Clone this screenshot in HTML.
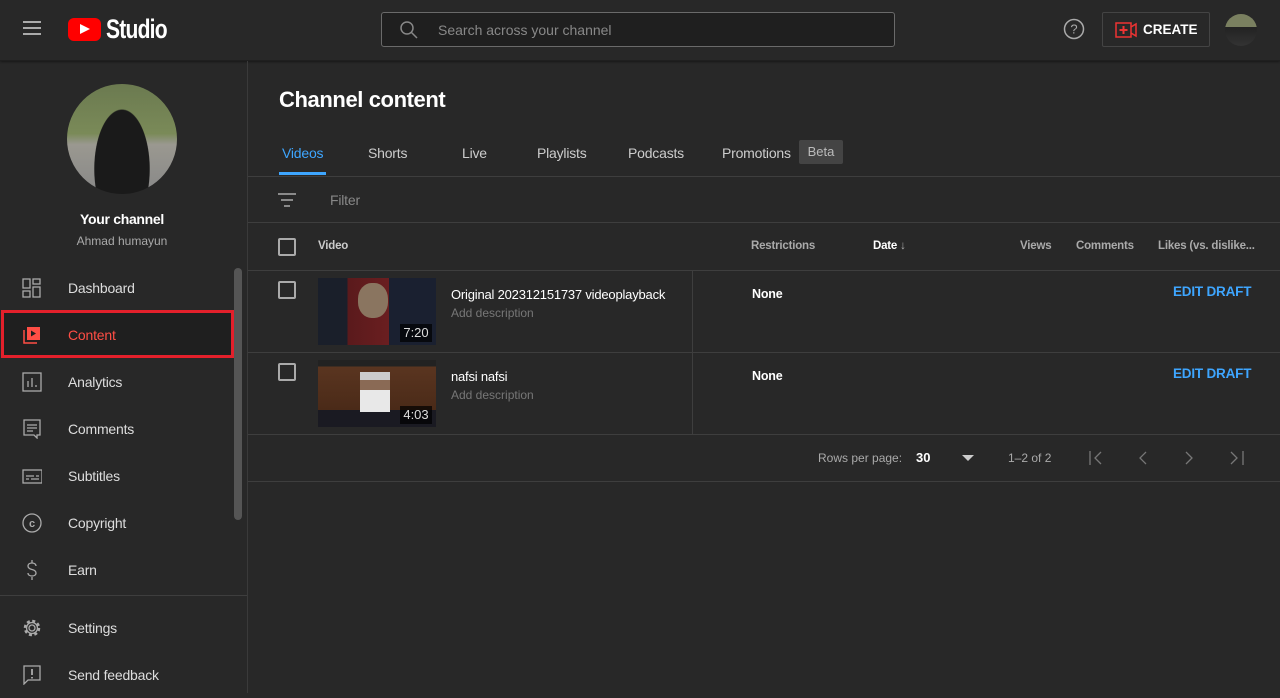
<!DOCTYPE html>
<html><head><meta charset="utf-8"><style>
*{box-sizing:border-box;margin:0;padding:0}
body{width:1280px;height:693px;overflow:hidden;background:#282828;font-family:"Liberation Sans",sans-serif;color:#fff;position:relative}
.abs{position:absolute}
.hdr{left:0;top:0;width:1280px;height:61px;border-bottom:1px solid #1f1f1f;box-shadow:0 1px 2px rgba(0,0,0,.4)}
.side{left:0;top:61px;width:248px;height:632px;border-right:1px solid #3a3a3a}
.nav{position:absolute;left:0;width:234px;height:47px;display:flex;align-items:center;font-size:14px;color:#ddd;letter-spacing:-.2px}
.nav svg{position:absolute;left:22px}
.nav span{position:absolute;left:68px}
.t{font-size:14px;letter-spacing:-.2px}
.tab{font-size:14px;letter-spacing:-.2px;color:#ccc}
.line{position:absolute;left:248px;width:1032px;height:1px;background:#3e3e3e}
.cb{position:absolute;width:18px;height:18px;border:2px solid #aaa;border-radius:2px}
.th{position:absolute;top:240px;font-size:11.5px;color:#aaa;font-weight:bold;letter-spacing:-.2px}
</style></head><body>
<div class="abs hdr">
 <div class="abs" style="left:23px;top:21px;width:18px;height:2px;background:#aaa;box-shadow:0 6px 0 #aaa,0 12px 0 #aaa"></div>
 <div class="abs" style="left:68px;top:18px;width:33px;height:23px;background:#f00;border-radius:6px"></div>
 <div class="abs" style="left:80px;top:24px;width:0;height:0;border-left:10px solid #fff;border-top:5.5px solid transparent;border-bottom:5.5px solid transparent"></div>
 <div class="abs" style="left:106px;top:14px;font-size:27px;font-weight:bold;letter-spacing:-1px;transform:scaleX(.78);transform-origin:left">Studio</div>
 <div class="abs" style="left:381px;top:12px;width:514px;height:35px;border:1px solid #6a6a6a;border-radius:3px;background:#1f1f1f">
  <svg class="abs" style="left:17px;top:7px" width="20" height="20" viewBox="0 0 20 20"><circle cx="8" cy="8" r="6" fill="none" stroke="#888" stroke-width="1.5"/><path d="M12.5 12.5L18 18" stroke="#888" stroke-width="1.5"/></svg>
  <div class="abs" style="left:56px;top:9px;font-size:14px;color:#888">Search across your channel</div>
 </div>
 <svg class="abs" style="left:1063px;top:18px" width="22" height="22" viewBox="0 0 22 22"><circle cx="11" cy="11" r="9.5" fill="none" stroke="#aaa" stroke-width="1.5"/><text x="11" y="15.5" font-size="13" text-anchor="middle" fill="#aaa" font-family="Liberation Sans">?</text></svg>
 <div class="abs" style="left:1102px;top:12px;width:108px;height:35px;border:1px solid #444;border-radius:2px">
  <svg class="abs" style="left:12px;top:9px" width="22" height="16" viewBox="0 0 22 16"><rect x="1" y="1" width="15" height="14" fill="none" stroke="#e33" stroke-width="1.5"/><path d="M16 5l5-3v12l-5-3" fill="none" stroke="#e33" stroke-width="1.5"/><path d="M8.5 4v8M4.5 8h8" stroke="#e33" stroke-width="2"/></svg>
  <div class="abs" style="left:40px;top:9px;font-size:13.5px;font-weight:bold">CREATE</div>
 </div>
 <div class="abs" style="left:1225px;top:14px;width:32px;height:32px;border-radius:50%;background:linear-gradient(#7a8060 0,#7a8060 40%,#222 40%,#333)"></div>
</div>
<div class="abs side">
 <div class="abs" style="left:67px;top:23px;width:110px;height:110px;border-radius:50%;background:radial-gradient(ellipse 28px 60px at 55px 85px,#1a1a1a 98%,transparent 100%),linear-gradient(#6b7a50 0,#7a8a58 45%,#9a9890 55%,#888 100%)"></div>
 <div class="abs" style="left:0;width:244px;top:150px;text-align:center;font-size:14px;font-weight:bold;letter-spacing:-.3px">Your channel</div>
 <div class="abs" style="left:0;width:244px;top:173px;text-align:center;font-size:12px;color:#aaa">Ahmad humayun</div>
 <div class="abs" style="left:234px;top:207px;width:8px;height:252px;background:#555;border-radius:4px"></div>
 <div class="nav" style="top:203px"><svg width="20" height="20" viewBox="0 0 20 20" fill="none" stroke="#aaa" stroke-width="1.3"><rect x="1" y="1" width="7" height="9"/><rect x="11" y="1" width="7" height="5"/><rect x="1" y="13" width="7" height="6"/><rect x="11" y="9" width="7" height="10"/></svg><span>Dashboard</span></div>
 <div class="abs" style="left:1px;top:249px;width:233px;height:48px;border:3px solid #e3202b;background:#1f1f1f"></div>
 <div class="nav" style="top:250px;color:#ff4e45"><svg width="20" height="20" viewBox="0 0 20 20"><path d="M2 5v13h13" fill="none" stroke="#ff4e45" stroke-width="1.5"/><rect x="5" y="2" width="13" height="13" fill="#ff4e45"/><path d="M9 5.5v6l5-3z" fill="#1f1f1f"/></svg><span>Content</span></div>
 <div class="nav" style="top:297px"><svg width="20" height="20" viewBox="0 0 20 20" fill="none" stroke="#aaa" stroke-width="1.3"><rect x="1" y="1" width="18" height="18"/><path d="M6 15V9M10 15V6M14 15v-2"/></svg><span>Analytics</span></div>
 <div class="nav" style="top:344px"><svg width="20" height="20" viewBox="0 0 20 20" fill="none" stroke="#aaa" stroke-width="1.3"><path d="M2 1h16v15H15v3l-3-3H2z"/><path d="M5 6h10M5 9h10M5 12h6"/></svg><span>Comments</span></div>
 <div class="nav" style="top:391px"><svg width="20" height="20" viewBox="0 0 20 20" fill="none" stroke="#aaa" stroke-width="1.3"><rect x="1" y="4" width="19" height="13"/><path d="M4 10h8M14 10h3M4 13h3M9 13h8"/></svg><span>Subtitles</span></div>
 <div class="nav" style="top:438px"><svg width="20" height="20" viewBox="0 0 20 20"><circle cx="10" cy="10" r="9" fill="none" stroke="#aaa" stroke-width="1.3"/><text x="10" y="14" font-size="11" text-anchor="middle" fill="#aaa" font-family="Liberation Sans" font-weight="bold">c</text></svg><span>Copyright</span></div>
 <div class="nav" style="top:485px"><svg width="20" height="20" viewBox="0 0 20 20" fill="none" stroke="#aaa" stroke-width="1.3"><path d="M14 6c0-2-2-3-4-3S6 4 6 6s2 3 4 3.5 4 1.5 4 3.5-2 3-4 3-4-1-4-3M10 0v3M10 17v3"/></svg><span>Earn</span></div>
 <div class="abs" style="left:0;top:534px;width:247px;height:1px;background:#3e3e3e"></div>
 <div class="nav" style="top:543px"><svg width="20" height="20" viewBox="0 0 20 20"><circle cx="10" cy="10" r="7" fill="none" stroke="#aaa" stroke-width="2.5" stroke-dasharray="3 2.5"/><circle cx="10" cy="10" r="5.5" fill="none" stroke="#aaa" stroke-width="1.3"/><circle cx="10" cy="10" r="3" fill="none" stroke="#aaa" stroke-width="1.3"/></svg><span>Settings</span></div>
 <div class="nav" style="top:590px"><svg width="20" height="20" viewBox="0 0 20 20" fill="none" stroke="#aaa" stroke-width="1.3"><path d="M2 1h16v14H6l-4 4z"/><path d="M10 4v6M10 12v1.5" stroke-width="1.8"/></svg><span>Send feedback</span></div>
</div>
<div class="abs" style="left:279px;top:87px;font-size:22px;font-weight:bold;letter-spacing:-.4px">Channel content</div>
<div class="abs tab" style="left:282px;top:145px;color:#3ea6ff">Videos</div>
<div class="abs" style="left:279px;top:172px;width:47px;height:3px;background:#3ea6ff"></div>
<div class="abs tab" style="left:368px;top:145px">Shorts</div>
<div class="abs tab" style="left:462px;top:145px">Live</div>
<div class="abs tab" style="left:537px;top:145px">Playlists</div>
<div class="abs tab" style="left:628px;top:145px">Podcasts</div>
<div class="abs tab" style="left:722px;top:145px">Promotions</div>
<div class="abs" style="left:799px;top:140px;width:44px;height:24px;background:#444;border-radius:2px;color:#bbb;font-size:13px;text-align:center;line-height:24px">Beta</div>
<div class="line" style="top:176px"></div>
<svg class="abs" style="left:277px;top:192px" width="20" height="16" viewBox="0 0 20 16" stroke="#aaa" stroke-width="1.5"><path d="M1 2h18M4 8h12M7 14h6"/></svg>
<div class="abs t" style="left:330px;top:192px;color:#888">Filter</div>
<div class="line" style="top:222px"></div>
<div class="cb" style="left:278px;top:238px"></div>
<div class="th" style="left:318px;color:#ccc">Video</div>
<div class="th" style="left:751px">Restrictions</div>
<div class="th" style="left:873px;color:#fff">Date <span style="color:#aaa;font-weight:normal">↓</span></div>
<div class="th" style="left:1020px">Views</div>
<div class="th" style="left:1076px">Comments</div>
<div class="th" style="left:1158px">Likes (vs. dislike...</div>
<div class="line" style="top:270px"></div>
<div class="cb" style="left:278px;top:281px"></div>
<div class="abs" style="left:318px;top:278px;width:118px;height:67px;background:linear-gradient(90deg,#1a1f2a 0,#1a1f2a 25%,#5a1a1c 25%,#6a1e20 60%,#1a2030 60%);"></div>
<div class="abs" style="left:358px;top:283px;width:30px;height:35px;border-radius:45%;background:#8a7560"></div>
<div class="abs" style="left:400px;top:324px;width:32px;height:18px;background:rgba(0,0,0,.7);font-size:13px;color:#ddd;text-align:center;line-height:18px">7:20</div>
<div class="abs" style="left:451px;top:287px;font-size:13px;letter-spacing:-.2px">Original 202312151737 videoplayback</div>
<div class="abs" style="left:451px;top:306px;font-size:12px;color:#777">Add description</div>
<div class="abs" style="left:692px;top:271px;width:1px;height:163px;background:#3e3e3e"></div>
<div class="abs" style="left:752px;top:287px;font-size:12.5px;font-weight:bold;letter-spacing:-.2px">None</div>
<div class="abs" style="left:1173px;top:284px;color:#3ea6ff;font-weight:bold;font-size:13.5px;letter-spacing:-.2px">EDIT DRAFT</div>
<div class="line" style="top:352px"></div>
<div class="cb" style="left:278px;top:363px"></div>
<div class="abs" style="left:318px;top:360px;width:118px;height:67px;background:linear-gradient(#222 0,#222 10%,#5a3520 10%,#4a2a18 75%,#1a1a22 75%)"></div>
<div class="abs" style="left:360px;top:372px;width:30px;height:40px;background:linear-gradient(#ccc 0,#ccc 20%,#8a6a55 20%,#8a6a55 45%,#e8e8e8 45%)"></div>
<div class="abs" style="left:400px;top:406px;width:32px;height:18px;background:rgba(0,0,0,.7);font-size:13px;color:#ddd;text-align:center;line-height:18px">4:03</div>
<div class="abs" style="left:451px;top:369px;font-size:13px;letter-spacing:-.2px">nafsi nafsi</div>
<div class="abs" style="left:451px;top:388px;font-size:12px;color:#777">Add description</div>
<div class="abs" style="left:752px;top:369px;font-size:12.5px;font-weight:bold;letter-spacing:-.2px">None</div>
<div class="abs" style="left:1173px;top:366px;color:#3ea6ff;font-weight:bold;font-size:13.5px;letter-spacing:-.2px">EDIT DRAFT</div>
<div class="line" style="top:434px"></div>
<div class="abs" style="left:818px;top:451px;font-size:12px;color:#aaa">Rows per page:</div>
<div class="abs" style="left:916px;top:450px;font-size:13px;font-weight:bold">30</div>
<div class="abs" style="left:962px;top:455px;width:0;height:0;border-top:6px solid #ccc;border-left:6px solid transparent;border-right:6px solid transparent"></div>
<div class="abs" style="left:1008px;top:451px;font-size:12px;color:#aaa">1–2 of 2</div>
<svg class="abs" style="left:1088px;top:450px" width="170" height="16" viewBox="0 0 170 16" fill="none" stroke="#777" stroke-width="1.3"><path d="M2 1v14M13 2l-6 6 6 6M58 2l-6 6 6 6M98 2l6 6-6 6M143 2l6 6-6 6M155 1v14"/></svg>
<div class="line" style="top:481px"></div>
</body></html>
